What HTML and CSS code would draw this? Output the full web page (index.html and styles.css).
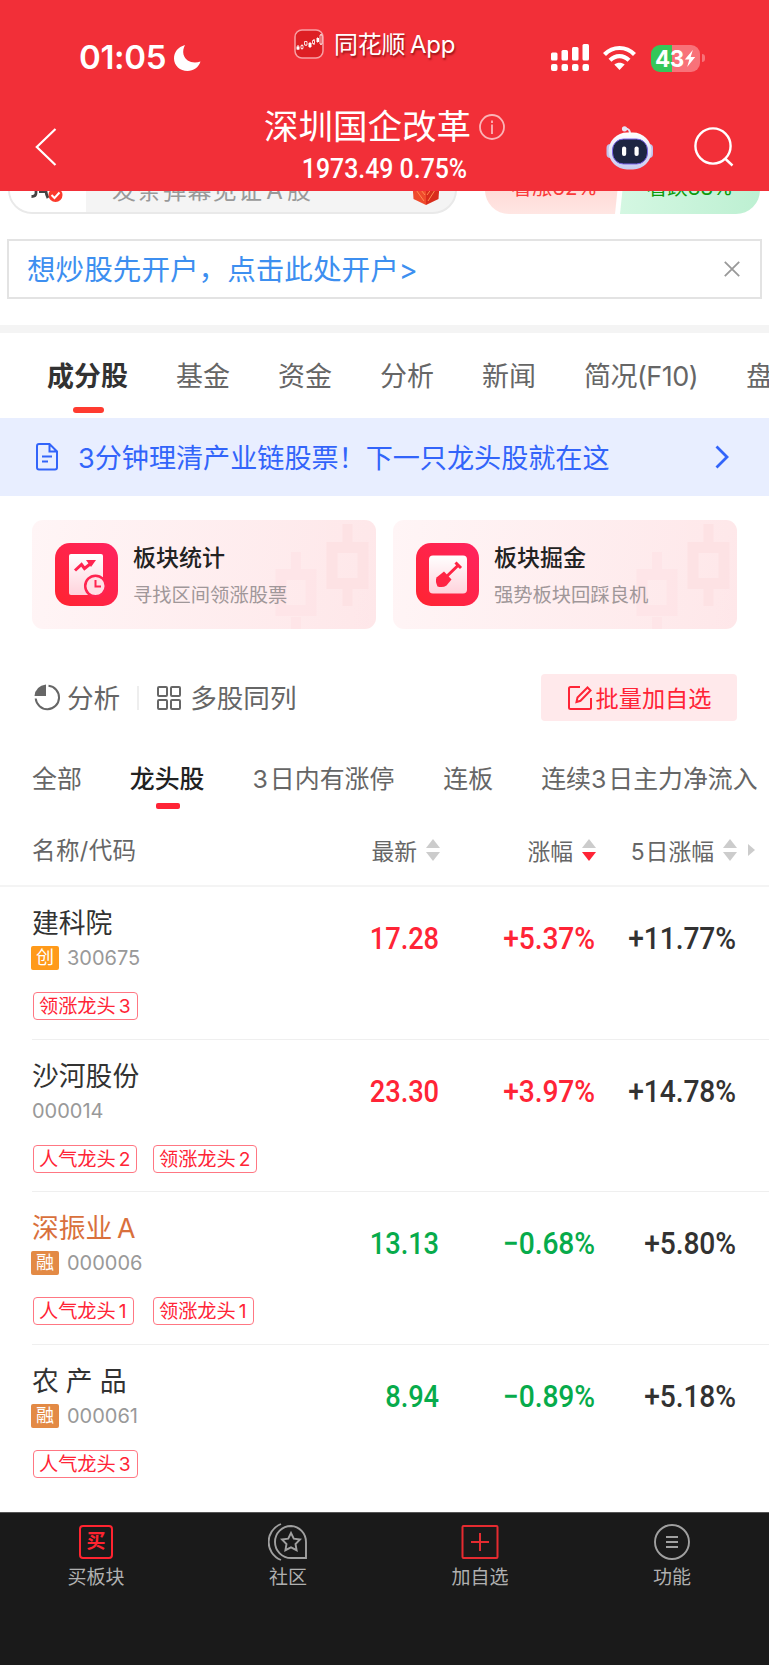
FILE: index.html
```html
<!DOCTYPE html>
<html lang="zh-CN">

<head>
    <title>深圳国企改革</title>
    <meta charset="UTF-8">
    <meta name="viewport" content="width=device-width, initial-scale=1.0">
    <link rel="stylesheet" href="styles.css">
</head>

<body>
    <header class="header">
        <div class="status">
            <span class="time">01:05</span>
            <svg class="moon" width="28" height="28" viewBox="0 0 28 28">
                <path d="M11 1C4 3 0 8 0 14.500C0 21.500 6 27 13.500 27C19.500 27 24.500 23.500 26.500 17.500C19 20 11.500 17.500 9.500 10.500C8.700 7 9.500 4 11 1Z" fill="#fff" />
            </svg>
            <div class="app-name">
                <svg width="30" height="30" viewBox="0 0 30 30">
                    <rect x="1" y="1" width="28" height="28" rx="7" fill="#dd1f24" stroke="#f8a0a4" stroke-width="1.500" />
                    <path d="M4 16v5M8 15.500v5M12 12v5M16 13v6M20 10v6M23.500 8.500v5M27 5v11" stroke="#fff" stroke-width="1" />
                    <path d="M2.500 17.500h3v3h-3zM14.500 14h3v4h-3zM22.500 9h2.500v4H22.500z" fill="#fff" />
                    <path d="M7 16.500h2v3h-2zM10.500 12.500h2.500v3.500h-2.500zM18.500 11.500h2v3h-2zM26 6h2v9h-2z" fill="#dd1f24" stroke="#fff" stroke-width=".8" />
                </svg>
                <span>同花顺 App</span>
            </div>
            <div class="status-right">
                <svg width="38" height="28" viewBox="0 0 38 28" fill="#fff">
                    <rect x="0" y="8.500" width="6.500" height="8" rx="1.500" />
                    <rect x="10.500" y="6" width="6.500" height="10.500" rx="1.500" />
                    <rect x="21" y="3" width="6.500" height="13.500" rx="1.500" />
                    <rect x="31.500" y="0" width="6.500" height="16.500" rx="1.500" />
                    <rect x="0" y="20" width="6.500" height="7" rx="2" />
                    <rect x="10.500" y="20" width="6.500" height="7" rx="2" />
                    <rect x="21" y="20" width="6.500" height="7" rx="2" />
                    <rect x="31.500" y="20" width="6.500" height="7" rx="2" />
                </svg>
                <svg class="wifi" width="33" height="26" viewBox="0 0 33 26" fill="none" stroke="#fff" stroke-width="4.200">
                    <path d="M1.500 9.500C10 .8 23 .8 31.500 9.500" />
                    <path d="M7 15.300C12.500 9.800 20.500 9.800 26 15.300" />
                    <path d="M16.500 25L11.300 19.600C14.500 17 18.500 17 21.700 19.600Z" fill="#fff" stroke="none" />
                </svg>
                <div class="battery">
                    <span>43</span>
                    <svg width="12" height="17" viewBox="0 0 11 18">
                        <path d="M8.500 0L0 10h4.800L2.500 18L11 7.500H6.200Z" fill="#fff" />
                    </svg>
                </div>
                <i class="battery-tip"></i>
            </div>
        </div>
        <div class="title-bar">
            <svg width="22" height="38" viewBox="0 0 22 38" fill="none" stroke="#fff" stroke-width="2.200">
                <path d="M20.500 1L1.800 19L20.500 37" />
            </svg>
            <div class="title">
                <div class="title-name">
                    <h1>深圳国企改革</h1>
                    <svg width="26" height="26" viewBox="0 0 26 26" fill="none" stroke="#fbb4b7" stroke-width="1.800">
                        <circle cx="13" cy="13" r="12" />
                        <path d="M13 10.500v9.500M13 6.500v2.500" />
                    </svg>
                </div>
                <p>1973.49 0.75%</p>
            </div>
            <div class="title-actions">
                <svg width="48" height="44" viewBox="0 0 48 44">
                    <defs>
                        <linearGradient id="head" x1="0" y1="0" x2="0" y2="1">
                            <stop offset="0" stop-color="#fff" />
                            <stop offset="1" stop-color="#c9cbee" />
                        </linearGradient>
                    </defs>
                    <path d="M19 2.500C23 2.500 24 4 24 8" fill="none" stroke="#e6e4f6" stroke-width="2.200" />
                    <circle cx="18.500" cy="2.800" r="2.600" fill="#e6e4f6" />
                    <rect x=".5" y="18" width="8" height="14" rx="4" fill="#c3c2ea" />
                    <rect x="39" y="18" width="8" height="14" rx="4" fill="#c3c2ea" />
                    <rect x="2.500" y="6.500" width="43" height="37" rx="18.500" fill="url(#head)" />
                    <rect x="6.500" y="13" width="35" height="25" rx="11" fill="#1d2542" stroke="#7a63e8" stroke-width="1" />
                    <rect x="16" y="20.500" width="4.200" height="9.500" rx="2" fill="#fff" />
                    <rect x="28.500" y="20.500" width="4.200" height="9.500" rx="2" fill="#fff" />
                </svg>
                <svg width="40" height="40" viewBox="0 0 40 40" fill="none" stroke="#fff" stroke-width="2.400">
                    <circle cx="19" cy="19" r="17.600" />
                    <path d="M31 31.500L38.500 38.500" />
                </svg>
            </div>
        </div>
    </header>

    <section class="danmu">
        <div class="danmu-input">
            <div class="danmu-switch">
                <svg width="34" height="30" viewBox="0 0 34 30" fill="none">
                    <path d="M6 2V18Q6 21.500 1.500 21.500M9 16.500H17M16.500 9Q14.500 16 18 23" stroke="#444" stroke-width="2.800" />
                    <circle cx="25.500" cy="20" r="7" fill="#fb3a2c" />
                    <path d="M21.500 20L24.500 23L29.500 17.500" stroke="#fff" stroke-width="2" />
                </svg>
            </div>
            <span>发条弹幕见证<b>A</b>股</span>
            <svg width="28" height="36" viewBox="0 0 28 36">
                <path d="M0 8L14 14V36L1.500 30Z" fill="#ef4a2c" />
                <path d="M28 8L14 14V36L26.500 30Z" fill="#d92c1c" />
                <path d="M2 18L12 32M5 16L13 26M25 18L16 32M22 16L15 26" stroke="#ff8a50" stroke-width="1" />
            </svg>
        </div>
        <div class="vote">
            <div class="vote-up">看涨62%</div>
            <div class="vote-down">看跌38%</div>
        </div>
    </section>

    <div class="open-account">
        <a>想炒股先开户，点击此处开户&gt;</a>
        <svg width="16" height="16" viewBox="0 0 16 16" stroke="#999" stroke-width="1.800">
            <path d="M.8 .8L15.200 15.200M15.200 .8L.8 15.200" />
        </svg>
    </div>

    <nav class="tabs">
        <span class="active">成分股</span>
        <span>基金</span>
        <span>资金</span>
        <span>分析</span>
        <span>新闻</span>
        <span class="brief">简况(F10)</span>
        <span>盘口</span>
    </nav>

    <div class="banner">
        <svg width="22" height="28" viewBox="0 0 22 28" fill="none" stroke="#3264fa" stroke-width="2">
            <path d="M13.500 1H3Q1 1 1 3V24.500Q1 26.500 3 26.500H19Q21 26.500 21 24.500V8.500ZM13.500 1V8.500H21M6 13.500H16M6 18.500H12" />
        </svg>
        <span>3分钟理清产业链股票！下一只龙头股就在这</span>
        <svg width="14" height="24" viewBox="0 0 14 24" fill="none" stroke="#3264fa" stroke-width="2.800">
            <path d="M1.500 1.500L12 12L1.500 22.500" />
        </svg>
    </div>

    <section class="cards">
        <div class="card">
            <svg class="card-icon" width="63" height="63" viewBox="0 0 63 63">
                <defs>
                    <linearGradient id="red" x1="1" y1="0" x2="0" y2="1">
                        <stop offset="0" stop-color="#ff2360" />
                        <stop offset="1" stop-color="#ff2430" />
                    </linearGradient>
                    <linearGradient id="paper" x1="0" y1="0" x2="0" y2="1">
                        <stop offset="0" stop-color="#fff" />
                        <stop offset="1" stop-color="#ffd3dc" />
                    </linearGradient>
                </defs>
                <rect width="63" height="63" rx="15" fill="url(#red)" />
                <rect x="14" y="11" width="34" height="41" rx="2" fill="url(#paper)" />
                <path d="M20 27.500L26.500 21.500L29.500 25.500L37 19.500" fill="none" stroke="#ff2450" stroke-width="3" />
                <path d="M31 17H41L36 24Z" fill="#ff2450" />
                <circle cx="40.500" cy="43" r="10.300" fill="#ffe0e6" stroke="#ff2450" stroke-width="2.500" />
                <path d="M40.500 37V43.500H46" fill="none" stroke="#ff2450" stroke-width="2" />
            </svg>
            <div class="card-text">
                <h3>板块统计</h3>
                <p>寻找区间领涨股票</p>
            </div>
            <svg class="candles" width="94" height="109" viewBox="0 0 94 109" fill="none" stroke="#fde0e3">
                <g opacity=".8">
                    <path d="M72.500 4V22M72.500 69V86" stroke-width="10" />
                    <rect x="57" y="27.500" width="31" height="36" stroke-width="11" />
                </g>
                <g opacity=".5">
                    <path d="M21 32V49M21 97V109" stroke-width="10" />
                    <rect x="6" y="54.500" width="30" height="36" stroke-width="11" />
                </g>
            </svg>
        </div>
        <div class="card">
            <svg class="card-icon" width="63" height="63" viewBox="0 0 63 63">
                <rect width="63" height="63" rx="15" fill="url(#red)" />
                <rect x="13" y="12.500" width="38" height="38" rx="4" fill="url(#paper)" />
                <path d="M29 35L43 21.500M39.500 19.500L45 25" stroke="#ff2444" stroke-width="3" />
                <path d="M28 28.500L35.500 36.500L30.500 42.500Q27 45 21.500 43.500Q19 38 20.500 34.500Z" fill="#ff2444" />
            </svg>
            <div class="card-text">
                <h3>板块掘金</h3>
                <p>强势板块回踩良机</p>
            </div>
            <svg class="candles" width="94" height="109" viewBox="0 0 94 109" fill="none" stroke="#fde0e3">
                <g opacity=".8">
                    <path d="M72.500 4V22M72.500 69V86" stroke-width="10" />
                    <rect x="57" y="27.500" width="31" height="36" stroke-width="11" />
                </g>
                <g opacity=".5">
                    <path d="M21 32V49M21 97V109" stroke-width="10" />
                    <rect x="6" y="54.500" width="30" height="36" stroke-width="11" />
                </g>
            </svg>
        </div>
    </section>

    <div class="tools">
        <svg width="27" height="27" viewBox="0 0 27 27">
            <path d="M14.500 1.800A11.700 11.700 0 1 1 1.700 14.500" fill="none" stroke="#666" stroke-width="2" />
            <path d="M12 .5V12H.5Q1.500 2 12 .5Z" fill="#666" />
        </svg>
        <span class="tool-name">分析</span>
        <i class="tool-line"></i>
        <svg width="24" height="24" viewBox="0 0 24 24" fill="none" stroke="#666" stroke-width="2">
            <rect x="1" y="1" width="9" height="9" rx="1" />
            <rect x="14" y="1" width="9" height="9" rx="1" />
            <rect x="1" y="14" width="9" height="9" rx="1" />
            <rect x="14" y="14" width="9" height="9" rx="1" />
        </svg>
        <span class="tool-name">多股同列</span>
        <button class="batch">
            <svg width="24" height="24" viewBox="0 0 24 24" fill="none" stroke="#ff2436" stroke-width="2">
                <path d="M12 1H2.500Q1 1 1 2.500V21.500Q1 23 2.500 23H21.500Q23 23 23 21.500V12" />
                <path d="M8.500 16L9.500 11.500L19.500 1.500L22.500 4.500L12.500 14.800Z" />
            </svg>
            <span>批量加自选</span>
        </button>
    </div>

    <nav class="filters">
        <span>全部</span>
        <span class="active">龙头股</span>
        <span><b>3</b>日内有涨停</span>
        <span>连板</span>
        <span>连续<b>3</b>日主力净流入</span>
    </nav>

    <div class="table-head">
        <span class="col-name">名称/代码</span>
        <span>最新<i class="sort"></i></span>
        <span>涨幅<i class="sort down"></i></span>
        <span><a><b>5</b>日涨幅</a><i class="sort"></i></span>
        <i class="more"></i>
    </div>

    <main class="stocks">
        <div class="stock">
            <div class="stock-name">
                <h2>建科院</h2>
                <p><i class="mark new">创</i>300675</p>
            </div>
            <span class="up">17.28</span>
            <span class="up">+5.37%</span>
            <span>+11.77%</span>
            <div class="tags">
                <div><em>领涨龙头<b>3</b></em></div>
            </div>
        </div>
        <div class="stock">
            <div class="stock-name">
                <h2>沙河股份</h2>
                <p>000014</p>
            </div>
            <span class="up">23.30</span>
            <span class="up">+3.97%</span>
            <span>+14.78%</span>
            <div class="tags">
                <div><em>人气龙头<b>2</b></em></div>
                <div><em>领涨龙头<b>2</b></em></div>
            </div>
        </div>
        <div class="stock">
            <div class="stock-name">
                <h2 class="margin-stock">深振业 A</h2>
                <p><i class="mark">融</i>000006</p>
            </div>
            <span class="fall">13.13</span>
            <span class="fall">−0.68%</span>
            <span>+5.80%</span>
            <div class="tags">
                <div><em>人气龙头<b>1</b></em></div>
                <div><em>领涨龙头<b>1</b></em></div>
            </div>
        </div>
        <div class="stock">
            <div class="stock-name">
                <h2>农 产 品</h2>
                <p><i class="mark">融</i>000061</p>
            </div>
            <span class="fall">8.94</span>
            <span class="fall">−0.89%</span>
            <span>+5.18%</span>
            <div class="tags">
                <div><em>人气龙头<b>3</b></em></div>
            </div>
        </div>
    </main>

    <footer class="bottom-bar">
        <div>
            <span class="buy">买</span>
            买板块
        </div>
        <div>
            <svg width="40" height="38" viewBox="0 0 40 38" fill="none" stroke="#a0a0a0" stroke-width="1.900">
                <path d="M13 1C-3.500 8 -3.500 30 13 37" />
                <path d="M23 3A16 16 0 0 0 23 35H38V19A15.500 16 0 0 0 23 3Z" />
                <path d="M23 10L25.800 15.700L32 16.500L27.500 21L28.600 27.200L23 24.300L17.400 27.200L18.500 21L14 16.500L20.200 15.700Z" />
            </svg>
            社区
        </div>
        <div>
            <svg width="38" height="38" viewBox="0 0 38 38" fill="none" stroke="#e52b30" stroke-width="2">
                <rect x="1.500" y="3" width="35" height="32" rx="1" />
                <path d="M10 19H28M19 10V28" />
            </svg>
            加自选
        </div>
        <div>
            <svg width="38" height="38" viewBox="0 0 38 38" fill="none" stroke="#a0a0a0" stroke-width="1.900">
                <circle cx="19" cy="19" r="17" />
                <path d="M13 14H25M13 19H25M13 24H25" />
            </svg>
            功能
        </div>
    </footer>
</body>

</html>
```
FILE: styles.css
```css
* {
    box-sizing: border-box;
}

body {
    font-family: Inter, "Noto Sans CJK SC", sans-serif;
    margin: 0;
    background-color: #fff;
    color: #323232;
    width: 769px;
    height: 1665px;
    overflow: hidden;
    display: flex;
    flex-direction: column;
}

h1,
h2,
h3,
p {
    margin: 0;
    font-weight: normal;
}

i,
em {
    font-style: normal;
}

b {
    font-weight: inherit;
}

svg {
    display: block;
    flex: none;
}

.header {
    height: 191px;
    flex: none;
    background-color: #f22f38;
    color: #fff;
}

.status {
    display: flex;
    align-items: center;
    height: 102px;
    padding: 14px 64px 0 79px;
}

.time {
    font-size: 33px;
    font-weight: 600;
    line-height: 38px;
    padding-bottom: 2px;
    width: 95px;
    white-space: nowrap;
    letter-spacing: -0.3px;
}

.app-name {
    display: flex;
    align-items: center;
    gap: 10px;
    margin: 0 0 28px 92px;
    font-size: 24px;
    line-height: 30px;
    text-shadow: 1px 2px 2px rgba(90, 0, 0, 0.6);
}

.app-name span {
    padding-top: 2px;
    word-spacing: -2px;
    letter-spacing: -0.2px;
}

.status-right {
    display: flex;
    align-items: center;
    margin-left: auto;
}

.wifi {
    margin: 0 15px 0 14px;
}

.battery {
    display: flex;
    align-items: center;
    justify-content: center;
    width: 49px;
    height: 27px;
    border-radius: 9px;
    background: linear-gradient(90deg, #34c759 43%, #f87279 43%);
    font-size: 22.5px;
    font-weight: 700;
    letter-spacing: -0.3px;
}

.battery-tip {
    width: 3px;
    height: 8px;
    margin-left: 2px;
    border-radius: 0 3px 3px 0;
    background-color: #f87279;
}

.title-bar {
    display: grid;
    grid-template-columns: 1fr auto 1fr;
    height: 89px;
    padding: 0 35px;
}

.title-bar > svg {
    margin-top: 26px;
}

.title-name {
    display: flex;
    align-items: center;
    gap: 8px;
}

.title h1 {
    font-size: 34.5px;
    line-height: 50px;
}

.title p {
    font-family: Roboto, sans-serif;
    font-size: 27px;
    font-weight: 500;
    line-height: 30px;
    margin-top: 2px;
    text-align: center;
    transform: scaleX(0.92);
}

.title-actions {
    display: flex;
    justify-content: flex-end;
    gap: 40px;
    padding-top: 24px;
}

.title-actions svg + svg {
    margin-top: 1px;
}

.danmu {
    display: flex;
    flex: none;
    align-items: flex-end;
    height: 23px;
    overflow: hidden;
    padding: 0 8px;
}

.danmu-input {
    display: flex;
    align-items: center;
    width: 449px;
    height: 48px;
    flex: none;
    border: 2px solid #e9e9e9;
    border-radius: 24px;
    background-color: #f4f4f4;
    overflow: hidden;
    font-size: 24px;
    color: #999;
}

.danmu-switch {
    display: flex;
    align-items: center;
    width: 76px;
    height: 48px;
    padding-left: 20px;
    margin-right: 26px;
    background-color: #fff;
}

.danmu-input > span {
    letter-spacing: 1.2px;
    width: 300px;
    margin-top: -4px;
}

.danmu-input b {
    margin: 0 3px;
}

.danmu-input > svg {
    margin-top: -7px;
}

.vote {
    display: flex;
    flex: none;
    margin-left: 28px;
    font-size: 20.5px;
    line-height: 44px;
    text-align: center;
}

.vote div {
    height: 48px;
}

.vote-up {
    width: 135px;
    padding-left: 4px;
    color: #fb3a3a;
    background: linear-gradient(#ffd0cc, #ffe6e3);
    border-radius: 24px 0 0 24px;
    clip-path: polygon(0 0, 100% 0, 130px 100%, 0 100%);
}

.vote-down {
    width: 140px;
    color: #0c9a0c;
    background: linear-gradient(90deg, #d4f7e2, #bdf0d2);
    border-radius: 0 24px 24px 0;
    clip-path: polygon(5px 0, 100% 0, 100% 100%, 0 100%);
}

.open-account {
    display: flex;
    flex: none;
    align-items: center;
    justify-content: space-between;
    height: 60px;
    margin: 25px 7px 26px 7px;
    padding: 0 20px 0 18px;
    border: 2px solid #e3e3e3;
    font-size: 28.6px;
    color: #3d8ff0;
}

.open-account a {
    padding-bottom: 3px;
}

.tabs {
    display: flex;
    flex: none;
    gap: 48px;
    height: 93px;
    padding-left: 47px;
    border-top: 8px solid #f4f4f4;
    font-size: 27px;
    line-height: 87px;
    white-space: nowrap;
    overflow: hidden;
    color: #666;
}

.tabs .active {
    position: relative;
    font-weight: 600;
    color: #323232;
}

.tabs .active::after {
    content: "";
    position: absolute;
    left: 26px;
    bottom: 5px;
    width: 31px;
    height: 6px;
    border-radius: 3px;
    background-color: #ff3b30;
}

.tabs .brief {
    letter-spacing: -0.5px;
}

.banner {
    display: flex;
    flex: none;
    align-items: center;
    height: 78px;
    padding: 0 40px 0 36px;
    background-color: #e8eeff;
    color: #3264fa;
    font-size: 27.1px;
}

.banner span {
    flex: 1;
    margin-left: 20px;
    padding-bottom: 2px;
}

.cards {
    display: grid;
    flex: none;
    grid-template-columns: 344px 344px;
    gap: 17px;
    padding: 24px 32px 0;
}

.card {
    position: relative;
    display: flex;
    align-items: center;
    height: 109px;
    padding: 0 0 1px 23px;
    border-radius: 11px;
    overflow: hidden;
    background: linear-gradient(100deg, #fff5f6, #fee7e9);
}

/* faint candlesticks behind the card text */
.candles {
    position: absolute;
    right: 7px;
    top: 0;
}

.card-text {
    position: relative;
    z-index: 1;
    margin-left: 15px;
    padding-top: 2px;
}

.card h3 {
    font-size: 23px;
    font-weight: 500;
    line-height: 34px;
    color: #222;
}

.card p {
    font-size: 19.3px;
    line-height: 28px;
    margin-top: 6px;
    color: #a09799;
}

.tools {
    display: flex;
    flex: none;
    align-items: center;
    height: 47px;
    margin: 45px 32px 0 34px;
    font-size: 26.6px;
    color: #666;
}

.tool-name {
    margin-left: 6px;
    padding-bottom: 2px;
}

.tool-line {
    width: 2px;
    height: 24px;
    margin: 0 18px 0 17px;
    background-color: #eee;
}

.tool-line ~ .tool-name {
    margin-left: 9px;
}

.batch {
    display: flex;
    align-items: center;
    justify-content: center;
    gap: 4px;
    width: 196px;
    height: 47px;
    margin-left: auto;
    padding: 0 0 0 1px;
    border: none;
    border-radius: 4px;
    background-color: #ffe9eb;
    color: #ff2436;
    font: 23.2px Inter, "Noto Sans CJK SC", sans-serif;
}

.batch span {
    padding-bottom: 2px;
}

.filters {
    display: flex;
    flex: none;
    gap: 48px;
    height: 94px;
    padding-left: 32px;
    font-size: 24.9px;
    line-height: 116px;
    white-space: nowrap;
    color: #666;
}

.filters b {
    margin: 0 2px 0 4px;
}

.filters b:first-child {
    margin-left: 0;
}

.filters span:nth-child(4) {
    margin-left: 1px;
}

.filters .active {
    position: relative;
    font-weight: 500;
    color: #222;
}

.filters .active::after {
    content: "";
    position: absolute;
    left: 26px;
    top: 82px;
    width: 24px;
    height: 6px;
    border-radius: 2px;
    background-color: #ff2436;
}

.table-head,
.stock {
    display: grid;
    grid-template-columns: 251px 156px 156px 141px 1fr;
}

.table-head {
    flex: none;
    align-items: center;
    height: 72px;
    padding-left: 32px;
    border-bottom: 2px solid #f4f4f4;
    font-size: 22.8px;
    color: #666;
}

.table-head span {
    display: flex;
    align-items: center;
    justify-content: flex-end;
    gap: 9px;
}

.table-head .col-name {
    justify-content: flex-start;
    font-size: 23.5px;
    letter-spacing: 0.4px;
    padding-bottom: 3px;
}

.table-head b {
    margin-right: 1px;
}

.sort {
    display: flex;
    flex-direction: column;
    gap: 4px;
    margin-right: -1px;
}

.sort::before,
.sort::after {
    content: "";
    border: 7px solid transparent;
}

.sort::before {
    border-top: none;
    border-bottom: 9px solid #ccc;
}

.sort::after {
    border-bottom: none;
    border-top: 9px solid #ccc;
}

.sort.down::after {
    border-top-color: #ff2436;
}

.more {
    width: 0;
    margin-left: 12px;
    border: 6px solid transparent;
    border-left: 7px solid #ccc;
    border-right: none;
}

.stocks {
    flex: none;
    height: 625px;
    padding-left: 32px;
}

.stock {
    grid-template-rows: 91px 1fr;
    height: 152.5px;
    border-bottom: 1px solid #efefef;
}

.stock:last-child {
    border-bottom: none;
}

.stock > span {
    font-family: Roboto, sans-serif;
    font-size: 31px;
    font-weight: 500;
    line-height: 103px;
    letter-spacing: -0.1px;
    text-align: right;
    transform: scaleX(0.91);
    transform-origin: right;
}

.stock > span:nth-child(2) {
    transform: scaleX(0.88);
}

.stock h2 {
    font-size: 26.8px;
    line-height: 38px;
    margin-top: 17px;
    word-spacing: -0.5px;
}

.stock .margin-stock {
    color: #d9703c;
    word-spacing: -3px;
}

.stock p {
    display: flex;
    align-items: center;
    gap: 8px;
    height: 24px;
    margin-top: 4px;
    font-size: 20px;
    color: #999;
}

.mark {
    width: 28px;
    height: 24px;
    margin-left: -1px;
    border-radius: 2px;
    background-color: #e38a45;
    color: #fff;
    font-size: 18px;
    line-height: 23px;
    text-align: center;
}

.mark.new {
    background-color: #ff9a1a;
}

.stock .up {
    color: #ff2436;
}

.stock .fall {
    color: #07ab4b;
}

.tags {
    grid-column: 1 / -1;
    display: grid;
    grid-template-columns: 120px 120px;
    align-items: start;
    padding: 14px 0 0 1px;
}

.tags em {
    display: inline-block;
    height: 28px;
    padding: 0 6px 0 5px;
    border: 1.5px solid #ff7783;
    border-radius: 4px;
    font-size: 19.2px;
    line-height: 26px;
    color: #ff2436;
    vertical-align: top;
}

.tags b {
    margin-left: 3px;
}

.bottom-bar {
    display: grid;
    flex: 1;
    grid-template-columns: repeat(4, 1fr);
    padding: 10px 1px 0 0;
    border-top: 1px solid #555;
    background-color: #1a1a1a;
    color: #b0b0b0;
    font-size: 19px;
}

.bottom-bar div {
    display: flex;
    flex-direction: column;
    align-items: center;
    gap: 3px;
    line-height: 28px;
}

.buy {
    width: 34px;
    height: 34px;
    margin: 2px 0;
    border: 2px solid #ff2430;
    border-radius: 4px;
    color: #ff2430;
    font-weight: 700;
    line-height: 29px;
    text-align: center;
}
```
